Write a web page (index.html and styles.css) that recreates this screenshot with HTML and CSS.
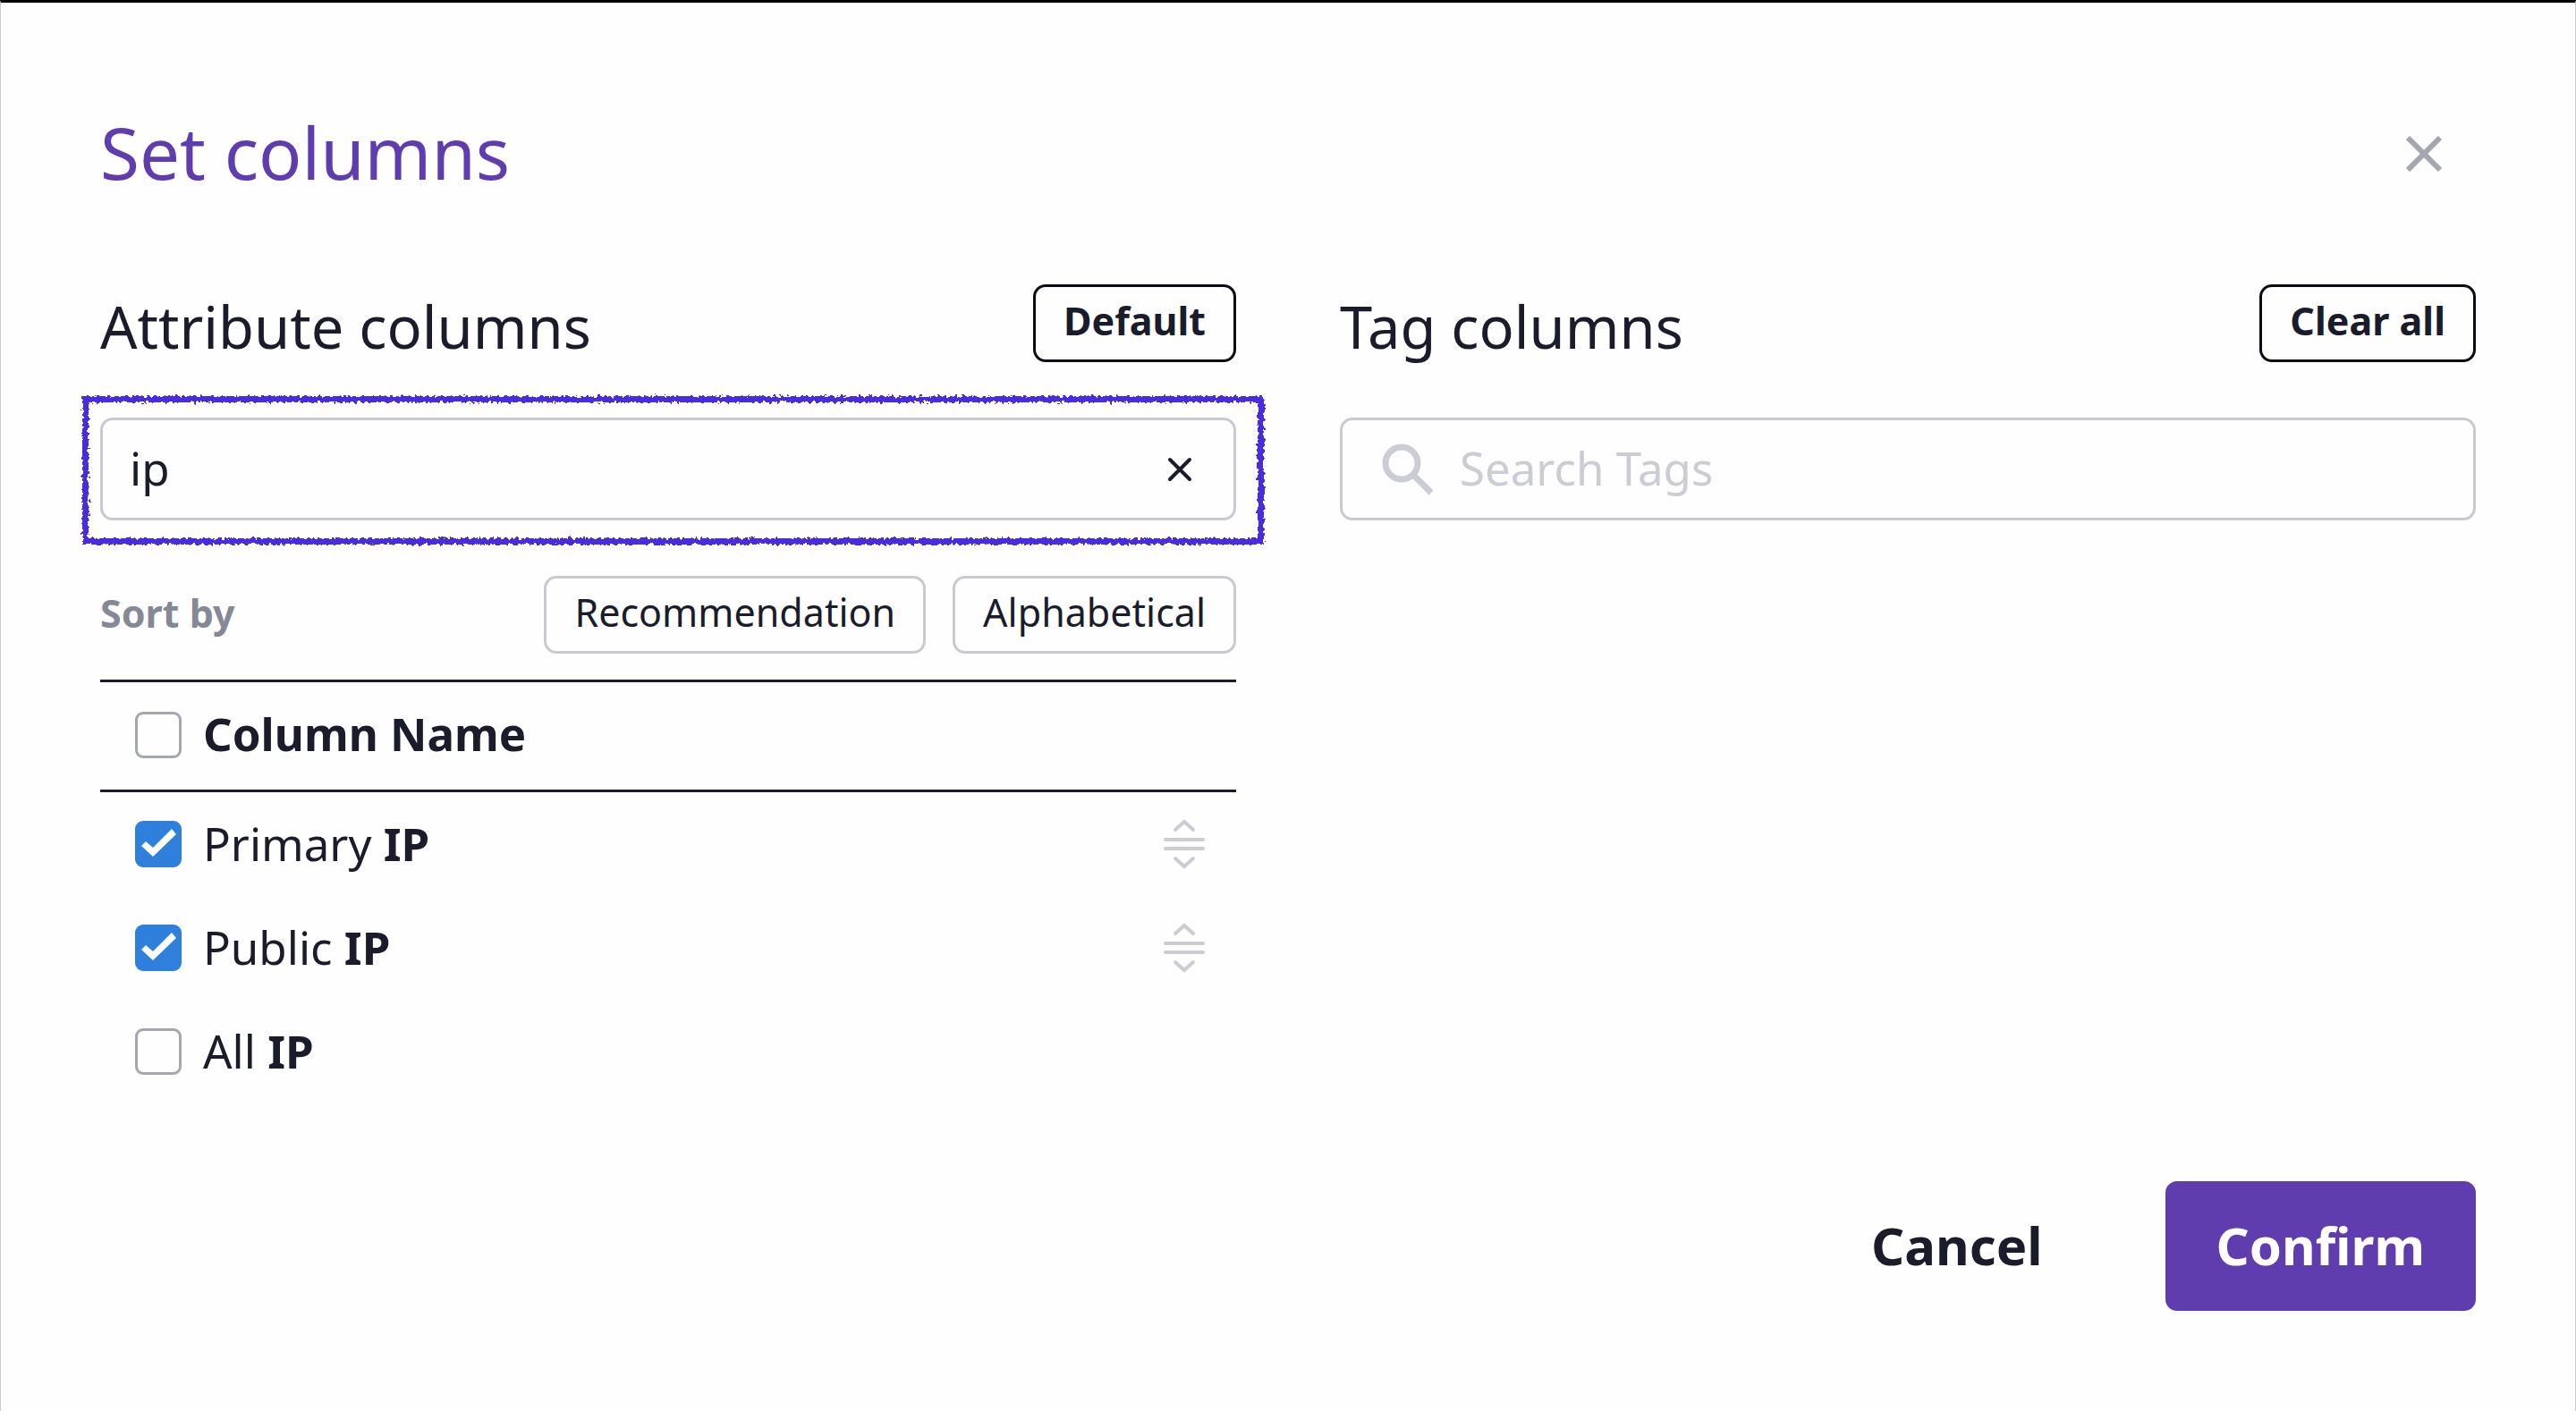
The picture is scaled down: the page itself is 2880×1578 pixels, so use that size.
FILE: index.html
```html
<!DOCTYPE html>
<html lang="en">
<head>
<meta charset="utf-8">
<meta name="viewport" content="width=device-width, initial-scale=1">
<title>Set columns</title>
<link rel="stylesheet" href="styles.css">
</head>
<body>
<svg class="defs" width="0" height="0" aria-hidden="true">
  <filter id="rough" x="-1%" y="-10%" width="102%" height="120%" color-interpolation-filters="sRGB">
    <feTurbulence type="fractalNoise" baseFrequency="0.25" numOctaves="3" seed="4" result="noise"/>
    <feDisplacementMap in="SourceGraphic" in2="noise" scale="7" xChannelSelector="R" yChannelSelector="G"/>
  </filter>
</svg>
<main class="dialog" role="dialog" aria-labelledby="dialog-title">
  <header class="dialog-header">
    <h1 class="dialog-title" id="dialog-title">Set columns</h1>
    <button class="icon-button close" type="button" aria-label="Close">
      <svg width="40" height="40" viewBox="0 0 40 40" fill="none" stroke="currentColor" stroke-width="6"><path d="M2 2 38 38M38 2 2 38"/></svg>
    </button>
  </header>

  <div class="columns">
    <section class="panel" aria-labelledby="attribute-title">
      <div class="panel-header">
        <h2 class="panel-title" id="attribute-title">Attribute columns</h2>
        <button class="button strong" type="button">Default</button>
      </div>
      <div class="search highlighted">
        <input class="search-input" type="text" value="ip" aria-label="Search attributes">
        <button class="icon-button" type="button" aria-label="Clear search">
          <svg width="28" height="28" viewBox="0 0 28 28" fill="none" stroke="currentColor" stroke-width="4" stroke-linecap="round"><path d="M3 3 25 25M25 3 3 25"/></svg>
        </button>
      </div>
      <div class="sort">
        <span class="sort-label">Sort by</span>
        <button class="button" type="button">Recommendation</button>
        <button class="button" type="button">Alphabetical</button>
      </div>
      <table class="column-table">
        <thead>
          <tr>
            <th colspan="2" scope="col"><label class="choice"><input class="checkbox" type="checkbox"><span class="choice-text">Column Name</span></label></th>
          </tr>
        </thead>
        <tbody>
          <tr>
            <td><label class="choice"><input class="checkbox" type="checkbox" checked><span class="choice-text">Primary <b>IP</b></span></label></td>
            <td class="handle-cell"><svg class="handle" width="46" height="56" viewBox="0 0 46 56"><path d="M13 12 23 3 33 12M2 23H44M2 33H44M13 44 23 53 33 44"/></svg></td>
          </tr>
          <tr>
            <td><label class="choice"><input class="checkbox" type="checkbox" checked><span class="choice-text">Public <b>IP</b></span></label></td>
            <td class="handle-cell"><svg class="handle" width="46" height="56" viewBox="0 0 46 56"><path d="M13 12 23 3 33 12M2 23H44M2 33H44M13 44 23 53 33 44"/></svg></td>
          </tr>
          <tr>
            <td><label class="choice"><input class="checkbox" type="checkbox"><span class="choice-text">All <b>IP</b></span></label></td>
            <td></td>
          </tr>
        </tbody>
      </table>
    </section>

    <section class="panel" aria-labelledby="tag-title">
      <div class="panel-header">
        <h2 class="panel-title" id="tag-title">Tag columns</h2>
        <button class="button strong" type="button">Clear all</button>
      </div>
      <div class="search with-icon">
        <svg class="search-icon" width="58" height="58" viewBox="0 0 58 58" fill="none" stroke="currentColor"><circle cx="22" cy="22" r="18" stroke-width="7"/><path d="M36 36 55 55" stroke-width="7"/></svg>
        <input class="search-input" type="text" placeholder="Search Tags" aria-label="Search Tags">
      </div>
    </section>
  </div>

  <footer class="dialog-footer">
    <button class="action" type="button">Cancel</button>
    <button class="action primary" type="button">Confirm</button>
  </footer>
</main>
</body>
</html>
```
FILE: styles.css
```css
:root {
  --ink: #1a1c2b;
  --line: #c9cad1;
  --muted: #a5a7b0;
  --violet: #5f3dae;
  --blue: #2f80dd;
}

* { box-sizing: border-box; }

body {
  margin: 0;
  background: #fefefe;
  color: var(--ink);
  font-family: "Noto Sans", sans-serif;
  font-size: 51px;
}

button, input { font: inherit; color: inherit; }
button { background: none; cursor: pointer; }
svg { display: block; }
.defs { position: absolute; }

.dialog {
  min-height: 100vh;
  padding: 112px 111px 110px;
  border: 1px solid var(--line);
  border-top: 3px solid #000;
  border-bottom: 0;
}

.dialog-header {
  display: flex;
  justify-content: space-between;
  align-items: center;
  padding-right: 28px;
}

.dialog-title {
  margin: 0;
  padding-bottom: 4px;
  font-size: 80px;
  font-weight: 400;
  line-height: 110px;
  color: var(--violet);
}

.icon-button {
  padding: 10px;
  border: 0;
}

.close { color: var(--muted); }

.columns {
  display: grid;
  grid-template-columns: 1fr 1fr;
  gap: 116px;
  margin-top: 89px;
}

.panel-header {
  display: flex;
  justify-content: space-between;
  align-items: flex-start;
}

.panel-title {
  margin: 0;
  font-size: 65px;
  font-weight: 400;
  line-height: 94px;
}

.button {
  height: 87px;
  padding: 0 31px 6px;
  border: 3px solid var(--line);
  border-radius: 14px;
  font-size: 43px;
}

.button.strong {
  border-color: #0b0c18;
  font-weight: 700;
}

.search {
  position: relative;
  display: flex;
  align-items: center;
  height: 115px;
  margin-top: 55px;
  padding: 0 36px 0 30px;
  border: 3px solid var(--line);
  border-radius: 14px;
}

.search.with-icon {
  gap: 29px;
  padding-left: 44px;
}

/* hand-drawn frame around the field */
.search.highlighted::after {
  content: "";
  position: absolute;
  inset: -27px -34px -30px -23px;
  border: 7px solid #4a2be0;
  filter: url(#rough);
  pointer-events: none;
}

.search-icon { color: #cccdd4; }

.search-input {
  flex: 1;
  min-width: 0;
  height: 100%;
  padding: 0 0 4px;
  border: 0;
  outline: 0;
  background: none;
}

.search-input::placeholder {
  color: #cccdd4;
  opacity: 1;
}

.sort {
  display: flex;
  align-items: center;
  gap: 30px;
  margin-top: 62px;
}

.sort-label {
  margin-right: auto;
  padding-bottom: 4px;
  font-size: 43px;
  font-weight: 700;
  color: #858895;
}

.column-table {
  width: 100%;
  margin-top: 29px;
  border-spacing: 0;
}

.column-table th {
  height: 126px;
  padding: 0 0 3px 39px;
  border: solid var(--ink);
  border-width: 3px 0;
  text-align: left;
}

.column-table td {
  height: 116px;
  padding: 0 0 0 39px;
}

.column-table .handle-cell { padding: 0 35px 0 0; }

.choice {
  display: flex;
  align-items: center;
  gap: 24px;
}

.choice-text { padding-bottom: 3px; }

.checkbox {
  appearance: none;
  width: 52px;
  height: 52px;
  margin: 0;
  border: 3px solid var(--muted);
  border-radius: 9px;
}

.checkbox:checked {
  border-color: var(--blue);
  background: var(--blue);
}

.checkbox:checked::before {
  content: "";
  display: block;
  width: 46px;
  height: 46px;
  background: #fff;
  clip-path: polygon(4px 25px, 9px 20px, 17px 27px, 38px 6px, 43px 12px, 17px 37px);
}

.handle {
  margin-left: auto;
  fill: none;
  stroke: #cccdd4;
  stroke-width: 4;
  stroke-linecap: round;
}

.dialog-footer {
  display: flex;
  justify-content: flex-end;
  gap: 80px;
  margin-top: 87px;
}

.action {
  height: 145px;
  padding: 0 57px 2px;
  border: 0;
  border-radius: 13px;
  font-size: 58px;
  font-weight: 700;
}

.action.primary {
  background: var(--violet);
  color: #fff;
}
```
